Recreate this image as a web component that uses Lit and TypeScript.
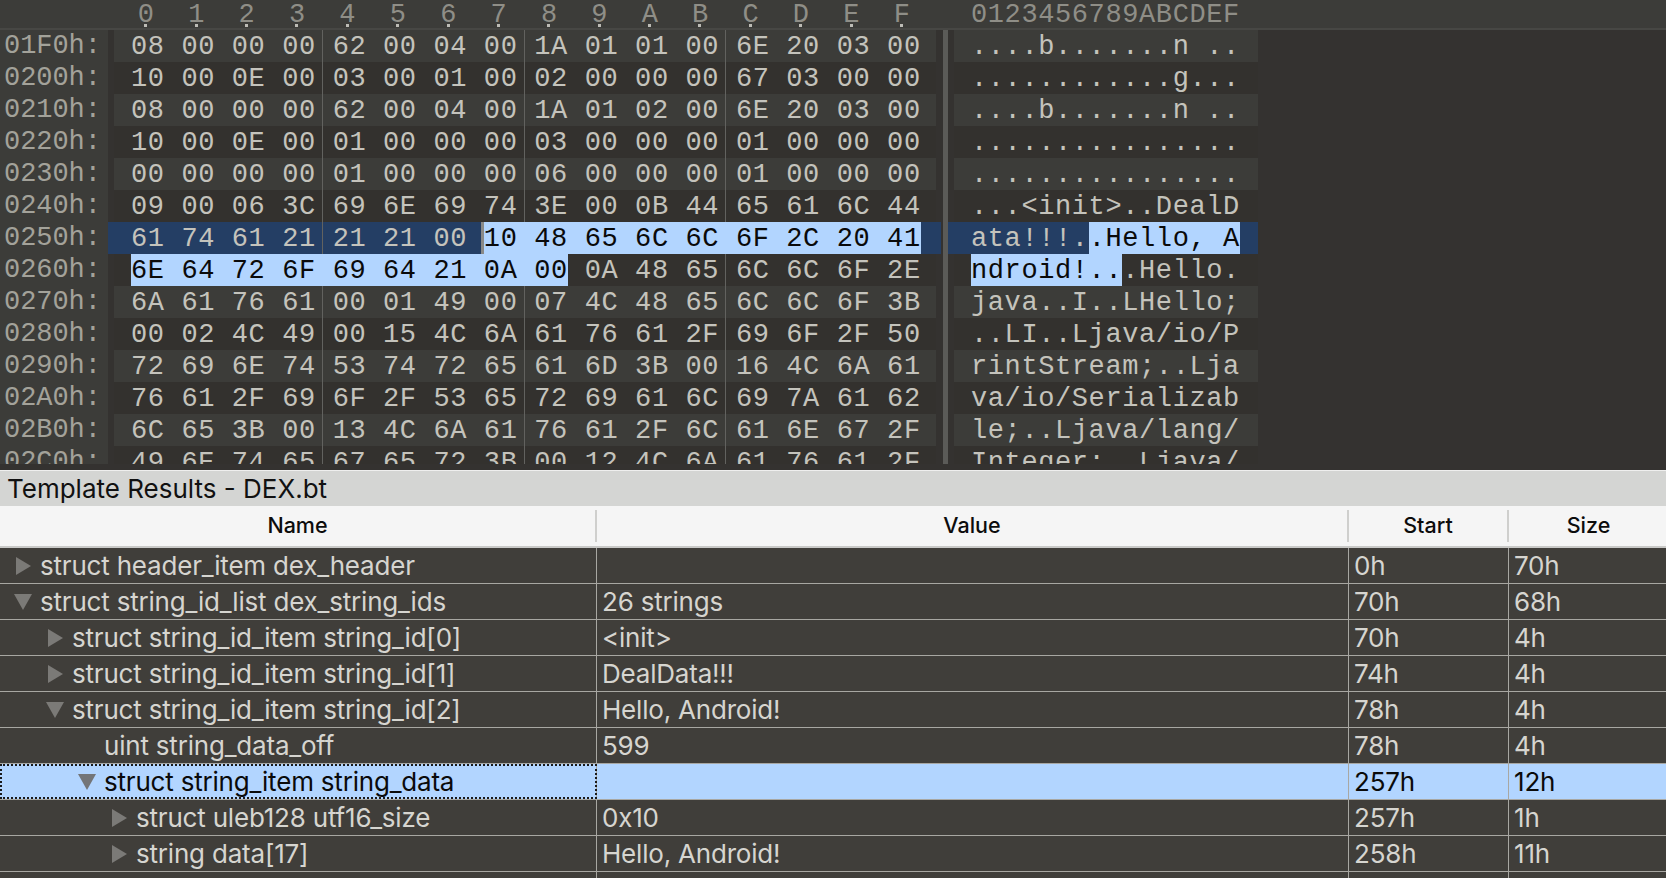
import { LitElement, html, css, svg } from "lit";
import { customElement } from "lit/decorators.js";

const HEX: [string, string, string][] = [
  ["01F0h:", "08 00 00 00 62 00 04 00 1A 01 01 00 6E 20 03 00", "....b.......n .."],
  ["0200h:", "10 00 0E 00 03 00 01 00 02 00 00 00 67 03 00 00", "............g..."],
  ["0210h:", "08 00 00 00 62 00 04 00 1A 01 02 00 6E 20 03 00", "....b.......n .."],
  ["0220h:", "10 00 0E 00 01 00 00 00 03 00 00 00 01 00 00 00", "................"],
  ["0230h:", "00 00 00 00 01 00 00 00 06 00 00 00 01 00 00 00", "................"],
  ["0240h:", "09 00 06 3C 69 6E 69 74 3E 00 0B 44 65 61 6C 44", "...<init>..DealD"],
  ["0250h:", "61 74 61 21 21 21 00 10 48 65 6C 6C 6F 2C 20 41", "ata!!!..Hello, A"],
  ["0260h:", "6E 64 72 6F 69 64 21 0A 00 0A 48 65 6C 6C 6F 2E", "ndroid!...Hello."],
  ["0270h:", "6A 61 76 61 00 01 49 00 07 4C 48 65 6C 6C 6F 3B", "java..I..LHello;"],
  ["0280h:", "00 02 4C 49 00 15 4C 6A 61 76 61 2F 69 6F 2F 50", "..LI..Ljava/io/P"],
  ["0290h:", "72 69 6E 74 53 74 72 65 61 6D 3B 00 16 4C 6A 61", "rintStream;..Lja"],
  ["02A0h:", "76 61 2F 69 6F 2F 53 65 72 69 61 6C 69 7A 61 62", "va/io/Serializab"],
  ["02B0h:", "6C 65 3B 00 13 4C 6A 61 76 61 2F 6C 61 6E 67 2F", "le;..Ljava/lang/"],
  ["02C0h:", "49 6E 74 65 67 65 72 3B 00 12 4C 6A 61 76 61 2F", "Integer;..Ljava/"],
];

type Row = { level: number; arrow: "" | "r" | "d"; name: string; value: string; start: string; size: string; sel?: boolean };
const ROWS: Row[] = [
  { level: 0, arrow: "r", name: "struct header_item dex_header", value: "", start: "0h", size: "70h" },
  { level: 0, arrow: "d", name: "struct string_id_list dex_string_ids", value: "26 strings", start: "70h", size: "68h" },
  { level: 1, arrow: "r", name: "struct string_id_item string_id[0]", value: "<init>", start: "70h", size: "4h" },
  { level: 1, arrow: "r", name: "struct string_id_item string_id[1]", value: "DealData!!!", start: "74h", size: "4h" },
  { level: 1, arrow: "d", name: "struct string_id_item string_id[2]", value: "Hello, Android!", start: "78h", size: "4h" },
  { level: 2, arrow: "", name: "uint string_data_off", value: "599", start: "78h", size: "4h" },
  { level: 2, arrow: "d", name: "struct string_item string_data", value: "", start: "257h", size: "12h", sel: true },
  { level: 3, arrow: "r", name: "struct uleb128 utf16_size", value: "0x10", start: "257h", size: "1h" },
  { level: 3, arrow: "r", name: "string data[17]", value: "Hello, Android!", start: "258h", size: "11h" },
  { level: 0, arrow: "", name: "", value: "", start: "", size: "" },
];

const COLS = "0123456789ABCDEF".split("");

@customElement("app-root")
export class AppRoot extends LitElement {
  static styles = css`
    :host { display: block; width: 1666px; height: 878px; overflow: hidden; background: #343230; }
    .hexpane { height: 470px; display: flex; flex-direction: column; background: #343230; }
    .mono { font-family: "Liberation Mono", monospace; font-size: 27px; letter-spacing: 0.6px; white-space: pre; }
    .hexhead { height: 30px; flex: none; display: flex; background: #3c3c39; border-bottom: 2px solid #474744; box-sizing: border-box; color: #8f8e87; line-height: 30px; }
    .hexhead .cols { margin-left: 121px; display: flex; width: 850px; }
    .hexhead .col { width: 50.4px; text-align: center; position: relative; }
    .hexhead .col::after { content: ""; position: absolute; left: 50%; bottom: 1px; width: 3px; height: 3px; margin-left: -2px; background: #bdbcb6; }
    .hexbody { height: 434px; overflow: hidden; flex: none; }
    .hrow { height: 32px; display: flex; line-height: 35px; color: #c4c3bc; }
    .addr { width: 108px; flex: none; padding-left: 4px; box-sizing: border-box; background: #3c3c39; color: #a3a29a; letter-spacing: -0.05px; line-height: 32px; }
    .bytes { --l0: 208px; --l1: 409.6px; --l2: 611px; margin-left: 6px; width: 822px; flex: none; padding-left: 17px; box-sizing: border-box;
      background-image: linear-gradient(#62625f, #62625f), linear-gradient(#62625f, #62625f), linear-gradient(#62625f, #62625f);
      background-size: 1px 100%; background-repeat: no-repeat; background-position: var(--l0) 0, var(--l1) 0, var(--l2) 0; }
    .vsep { width: 5px; margin-left: 7px; flex: none; background: #5b5b58; }
    .ascii { margin-left: 6px; width: 304px; flex: none; padding-left: 17px; box-sizing: border-box; }
    .odd .bytes, .odd .ascii { background-color: #3c3c39; }
    .even .bytes, .even .ascii { background-color: #33312e; }
    .active .bytes { --l0: 214px; --l1: 415.6px; --l2: 617px; margin-left: 0; width: 833px; padding-left: 23px; background-color: #243e64; }
    .active .vsep { margin-left: 2px; }
    .active .ascii { margin-left: 0; width: 310px; padding-left: 23px; background-color: #243e64; }
    .sel { display: inline-block; height: 32px; background: #b2d5ff; color: #0a0a0a; }
    .caret { box-shadow: -3px 0 0 #8a8a88; }
    .panel { height: 408px; flex: none; border-top: 1px solid #efefee; box-sizing: border-box; font-family: Inter, "Liberation Sans", sans-serif; overflow: hidden; background: #403e3a; }
    .title { height: 35px; background: #d4d5d3; color: #111; font-size: 26px; line-height: 36px; padding-left: 7px; }
    .grid { display: grid; grid-template-columns: 597px 752px 160px 1fr; }
    .thead { height: 42px; background: #f5f5f5; border-bottom: 2px solid #c9c9c7; box-sizing: border-box; color: #0c0c0c; font-size: 21.5px; font-weight: 500; }
    .thead div { margin: 4px 0; height: 32px; line-height: 31px; text-align: center; border-right: 2px solid #cfcfcd; }
    .thead div:last-child { border-right: none; padding-left: 2px; }
    .trow { height: 36px; color: #d6d5d0; font-size: 26px; border-bottom: 1.5px solid #a8a7a2; box-sizing: border-box; letter-spacing: -0.2px; }
    .trow:first-child { height: 35px; }
    .cell { display: flex; align-items: center; padding-left: 5px; border-right: 1.5px solid #a8a7a2; box-sizing: border-box; white-space: nowrap; overflow: hidden; }
    .cell:last-child { border-right: none; }
    .trow.selrow { background: #b2d5ff; color: #0a0a0a; }
    .selrow .cell:first-child { outline: 2px dotted #1a1a1a; outline-offset: -2px; }
    .arrow { width: 18px; height: 18px; flex: none; margin-right: 8px; }
    .arrow.none { visibility: hidden; }
  `;

  private arrow(kind: string, sel?: boolean) {
    const fill = sel ? "#737578" : "#7b7a77";
    const shape = kind === "d" ? svg`<polygon points="0,1 18,1 9,17"></polygon>` : svg`<polygon points="2,0 17,9 2,18"></polygon>`;
    return html`<svg class="arrow ${kind ? "" : "none"}" viewBox="0 0 18 18" fill=${fill}>${shape}</svg>`;
  }

  private renderBytes(i: number, text: string) {
    if (i === 6) {
      const a = text.slice(0, 21), b = text.slice(21);
      return html`${a}<span class="sel caret">${b}</span>`;
    }
    if (i === 7) {
      const a = text.slice(0, 26), b = text.slice(26);
      return html`<span class="sel">${a}</span>${b}`;
    }
    return text;
  }

  private renderAscii(i: number, text: string) {
    if (i === 6) return html`${text.slice(0, 7)}<span class="sel">${text.slice(7)}</span>`;
    if (i === 7) return html`<span class="sel">${text.slice(0, 9)}</span>${text.slice(9)}`;
    return text;
  }

  render() {
    return html`
      <div class="hexpane">
        <div class="hexhead mono">
          <div class="cols">${COLS.map((c) => html`<div class="col">${c}</div>`)}</div>
          <div>0123456789ABCDEF</div>
        </div>
        <div class="hexbody">
          ${HEX.map(
            ([addr, bytes, ascii], i) => html`
              <div class="hrow mono ${i % 2 ? "even" : "odd"} ${i === 6 ? "active" : ""}">
                <div class="addr">${addr}</div>
                <div class="bytes">${this.renderBytes(i, bytes)}</div>
                <div class="vsep"></div>
                <div class="ascii">${this.renderAscii(i, ascii)}</div>
              </div>
            `,
          )}
        </div>
      </div>
      <div class="panel">
        <div class="title">Template Results - DEX.bt</div>
        <div class="grid thead">
          <div>Name</div><div>Value</div><div>Start</div><div>Size</div>
        </div>
        ${ROWS.map(
          (r) => html`
            <div class="grid trow ${r.sel ? "selrow" : ""}">
              <div class="cell" style="padding-left:${14 + r.level * 32}px">${this.arrow(r.arrow, r.sel)}<span>${r.name}</span></div>
              <div class="cell">${r.value}</div>
              <div class="cell">${r.start}</div>
              <div class="cell">${r.size}</div>
            </div>
          `,
        )}
      </div>
    `;
  }
}
